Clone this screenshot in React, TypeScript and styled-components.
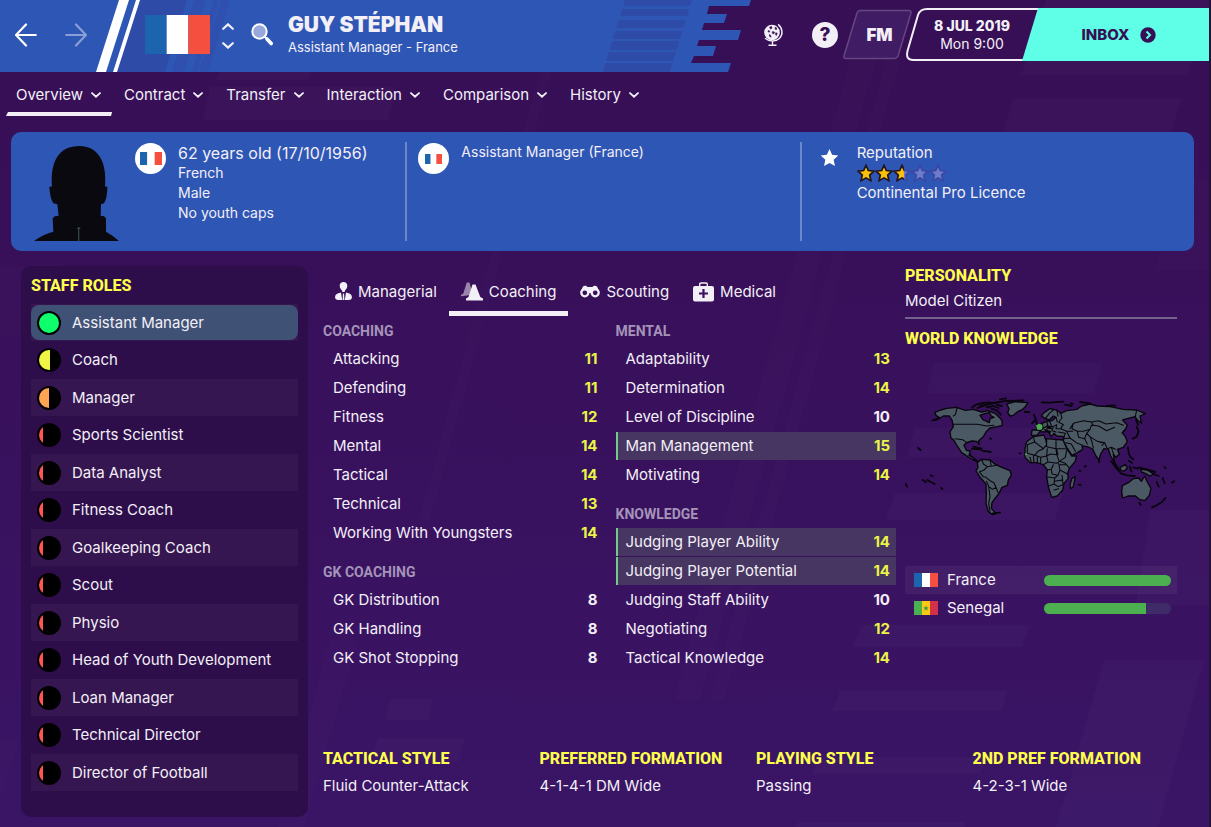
import React from "react";
import styled, { createGlobalStyle } from "styled-components";

const color = {
  blue: "#2e56b5",
  purple: "#370f55",
  purpleLow: "#3a1566",
  text: "#f3eff7",
  yellow: "#fffe4d",
  lime: "#e9f546",
  mint: "#5effe6",
  green: "#4caf50",
  muted: "#a594b9",
};

const font = {
  body: `Inter, "Liberation Sans", sans-serif`,
  heading: `Roboto, "Liberation Sans", sans-serif`,
};

const GlobalStyle = createGlobalStyle`
  *, *::before, *::after { box-sizing: border-box; }
  body {
    margin: 0;
    background: ${color.purpleLow};
    color: ${color.text};
    font-family: ${font.body};
    font-size: 15px;
    line-height: 20px;
  }
  button { font: inherit; color: inherit; background: none; border: 0; padding: 0; cursor: pointer; }
  ul, h1, h2, p, dl, dd { margin: 0; padding: 0; list-style: none; }
  svg { display: block; flex: none; }
`;

/* ---------- page frame ---------- */

const Page = styled.div`
  position: relative;
  isolation: isolate;
  display: flex;
  flex-direction: column;
  min-height: 100vh;
  overflow: hidden;
  background: linear-gradient(${color.purple}, #38105b 40%, ${color.purpleLow});
`;

const Backdrop = styled.svg`
  position: absolute;
  inset: 0;
  z-index: -1;
`;

const Header = styled.header`
  position: relative;
  display: flex;
  align-items: center;
  height: 72px;
  padding: 0 2px 3px 15px;
`;

const HeaderArt = styled.svg`
  position: absolute;
  left: 0;
  top: 0;
  z-index: -1;
`;

const History = styled.div`
  display: flex;
  gap: 28px;
`;

const FlagSlot = styled.div`
  margin: 0 12px 0 58px;
`;

const Stepper = styled.div`
  display: flex;
  flex-direction: column;
  gap: 12px;
  margin-right: 17px;
  padding-top: 3px;
`;

const Identity = styled.div`
  margin-left: 15px;
`;

const Name = styled.h1`
  font-size: 21px;
  line-height: 24px;
  font-weight: 900;
`;

const Subtitle = styled.p`
  font-size: 13px;
`;

const Tools = styled.div`
  display: flex;
  align-items: center;
  margin-left: auto;
`;

const IconButton = styled.button`
  margin-right: 29px;
`;

const HelpButton = styled.button`
  display: grid;
  place-items: center;
  width: 26px;
  height: 26px;
  margin-right: 5px;
  border-radius: 50%;
  background: ${color.text};
  color: ${color.purple};
  font-size: 19px;
  font-weight: 800;
`;

const SlantedButton = styled.button<{ $width: number }>`
  position: relative;
  display: grid;
  place-content: center;
  width: ${(p) => p.$width}px;
  height: 53px;
  text-align: center;
  font-size: 14px;
  line-height: 18px;

  svg { position: absolute; inset: 0; z-index: -1; }
  strong { font-weight: 800; }
`;

const FmButton = styled(SlantedButton)`
  margin-right: -6px;
  strong { font-size: 17px; font-weight: 900; padding-left: 4px; }
`;

const InboxButton = styled.button`
  display: flex;
  align-items: center;
  justify-content: center;
  gap: 11px;
  width: 187px;
  height: 53px;
  margin-left: -16px;
  padding-left: 7px;
  background: ${color.mint};
  clip-path: polygon(16px 0, 100% 0, 100% 100%, 0 100%);
  color: ${color.purple};
  font-weight: 800;
`;

/* ---------- section menu ---------- */

const Nav = styled.nav`
  display: flex;
  gap: 2px;
  padding: 0 6px;
`;

const NavItem = styled.button<{ $active?: boolean }>`
  display: flex;
  align-items: center;
  gap: 8px;
  height: 44px;
  padding: 2px 11px 0 10px;
  background: ${(p) => (p.$active ? `linear-gradient(${color.text}, ${color.text}) bottom / 100% 4px no-repeat` : "none")};
  clip-path: polygon(2px 0, 100% 0, 100% 40px, calc(100% - 1px) 100%, 0 100%, 2px 40px);
`;

/* ---------- summary card ---------- */

const Summary = styled.section`
  display: grid;
  grid-template-columns: repeat(3, minmax(0, 1fr));
  margin: 16px 17px 15px 11px;
  padding: 10px 0;
  border-radius: 10px;
  background: ${color.blue};
`;

const SummaryCell = styled.div<{ $inset: number }>`
  display: flex;
  align-items: flex-start;
  height: 99px;
  padding-left: ${(p) => p.$inset}px;

  & + & { border-left: 2px solid #6c88cb; }
`;

const Portrait = styled.svg`
  align-self: flex-end;
  margin-right: 16px;
`;

const RoundFlag = styled.div`
  display: grid;
  place-items: center;
  flex: none;
  width: 31px;
  height: 31px;
  margin: 1px 12px 0 0;
  border-radius: 50%;
  background: #fff;
`;

const Facts = styled.div<{ $small?: boolean }>`
  padding-top: 1px;
  font-size: ${(p) => (p.$small ? 14 : 15)}px;
`;

const Job = styled.p`
  font-size: 14px;
`;

const AgeLine = styled.p`
  font-size: 16px;
`;

const StarSlot = styled.div`
  margin: 6px 18px 0 0;
`;

const Stars = styled.div`
  display: flex;
  height: 20px;
  align-items: center;
`;

/* ---------- body ---------- */

const Body = styled.main`
  display: flex;
  flex: 1;
  gap: 15px;
  padding: 0 22px 10px 21px;
`;

const Sidebar = styled.aside`
  flex: none;
  width: 287px;
  padding: 10px 10px 26px;
  border-radius: 10px;
  background: #2d0e4b;
`;

const Heading = styled.h2`
  font-family: ${font.heading};
  font-size: 16px;
  line-height: 20px;
  font-weight: 800;
  color: ${color.yellow};
`;

const RoleList = styled.ul`
  && { margin-top: 8px; }
`;

const RoleRow = styled.li`
  height: 38px;
  padding: 1px 0;

  &:nth-child(odd) {
    height: 37px;
    background: #361650;
  }
`;

const RoleButton = styled.button<{ $selected: boolean }>`
  display: flex;
  align-items: center;
  gap: 11px;
  width: 100%;
  height: 100%;
  padding: 0 6px;
  border-radius: 8px;
  background: ${(p) => (p.$selected ? "#3f5276" : "transparent")};
`;

const Dial = styled.span`
  flex: none;
  width: 24px;
  height: 24px;
  padding: 2px;
  border-radius: 50%;
  background: #000;
`;

const DialFill = styled.span<{ $share: number; $tone: string }>`
  display: block;
  height: 100%;
  border-radius: 50%;
  background: linear-gradient(90deg, ${(p) => `${p.$tone} ${p.$share}%, #000 ${p.$share}%`});
`;

const Content = styled.div`
  display: flex;
  flex: 1;
  flex-direction: column;
  justify-content: space-between;
  min-width: 0;
`;

const Upper = styled.div`
  display: flex;
  gap: 9px;
  padding-right: 12px;
`;

const Attributes = styled.section`
  flex: 1;
  min-width: 0;
  padding-top: 2px;
`;

const Tabs = styled.div`
  display: flex;
`;

const Tab = styled.button<{ $active?: boolean }>`
  display: flex;
  align-items: center;
  gap: 6px;
  height: 48px;
  padding: 4px 12px 0;
  border-bottom: 5px solid ${(p) => (p.$active ? color.text : "transparent")};
`;

const AttributeColumns = styled.div`
  display: grid;
  grid-template-columns: 1fr 1fr;
  gap: 12px;
`;

const AttributeTable = styled.table`
  width: 100%;
  border-collapse: separate;
  border-spacing: 0 1px;

  & + & { margin-top: 9px; }
  tbody th, td { height: 28px; padding: 0; text-align: left; }
`;

const GroupName = styled.th`
  height: 27px;
  padding: 0;
  text-align: left;
  font-family: ${font.heading};
  font-size: 14px;
  line-height: 18px;
  font-weight: 700;
  color: ${color.muted};
`;

const AttributeRow = styled.tr<{ $key?: boolean }>`
  background: ${(p) => (p.$key ? "#473562" : "transparent")};

  && th { padding-left: 10px; font-weight: 400; box-shadow: ${(p) => (p.$key ? "inset 2px 0 #75c98a" : "none")}; }
`;

const Score = styled.td<{ $good: boolean }>`
  && { padding-right: 6px; text-align: right; }
  font-weight: 700;
  color: ${(p) => (p.$good ? color.lime : color.text)};
`;

const Knowledge = styled.aside`
  flex: none;
  width: 272px;
`;

const Personality = styled.p`
  && { padding: 5px 0 6px; margin-bottom: 10px; }
  border-bottom: 2px solid #76608c;
`;

const WorldMap = styled.svg`
  margin: 46px 0;
`;

const Nation = styled.div`
  display: flex;
  align-items: center;
  height: 28px;
  padding: 0 6px 0 9px;

  &:nth-of-type(odd) { background: rgba(255, 255, 255, 0.05); }
  span { flex: 1; padding-left: 9px; }
`;

const Bar = styled.div`
  width: 127px;
  height: 11px;
  border-radius: 6px;
  overflow: hidden;
  background: #3f2b68;
`;

const BarFill = styled.div`
  height: 100%;
  background: ${color.green};
`;

const Styles = styled.dl`
  display: grid;
  grid-template-columns: repeat(4, minmax(0, 1fr));
  padding-bottom: 21px;
`;

const StyleName = styled.dt`
  margin-bottom: 7px;
  font-family: ${font.heading};
  font-size: 16px;
  font-weight: 800;
  color: ${color.yellow};
`;

/* ---------- drawings ---------- */

const FranceFlag = ({ w, h }: { w: number; h: number }) => (
  <svg width={w} height={h} viewBox="0 0 3 2" preserveAspectRatio="none" aria-label="France" role="img">
    <rect width="1" height="2" fill="#1c65ae" />
    <rect x="1" width="1" height="2" fill="#fff" />
    <rect x="2" width="1" height="2" fill="#f5503f" />
  </svg>
);

const SenegalFlag = () => (
  <svg width="24" height="14" viewBox="0 0 24 14" aria-label="Senegal" role="img">
    <rect width="8" height="14" fill="#4caf50" />
    <rect x="8" width="8" height="14" fill="#fbc812" />
    <rect x="16" width="8" height="14" fill="#d3304a" />
    <path d="M12 4.500l.8 1.800 2 .1-1.600 1.300.6 2L12 8.600l-1.800 1.100.6-2-1.600-1.300 2-.1z" fill="#3f9a45" />
  </svg>
);

const Chevron = ({ up, w = 10, h = 6 }: { up?: boolean; w?: number; h?: number }) => (
  <svg width={w} height={h} viewBox="0 0 12 7" fill="none" stroke="#f3eff7" strokeWidth="2.200" strokeLinecap="round">
    <path d={up ? "M1.200 5.800L6 1.400l4.800 4.400" : "M1.200 1.200L6 5.600l4.800-4.400"} />
  </svg>
);

const Arrow = ({ forward }: { forward?: boolean }) => (
  <svg width="22" height="24" viewBox="0 0 22 24" fill="none" strokeWidth="2.200" strokeLinecap="round"
    stroke={forward ? "#8b9fd6" : "#fff"}>
    <path d={forward ? "M1.200 12H21M11 1.500L21 12 11 22.500" : "M20.800 12H1M11 1.500L1 12l10 10.500"} />
  </svg>
);

const SearchIcon = () => (
  <svg width="22" height="23" viewBox="0 0 22 23">
    <circle cx="8.500" cy="8.500" r="7.200" fill="#97a9dc" stroke="#fff" strokeWidth="2" />
    <path d="M13.800 13.800l2 2" stroke="#fff" strokeWidth="2" />
    <path d="M16.200 16.200l4 4.300" stroke="#fff" strokeWidth="3.600" strokeLinecap="round" />
  </svg>
);

const GlobeIcon = () => (
  <svg width="20" height="24" viewBox="0 0 20 24">
    <circle cx="9" cy="9.500" r="7.800" fill="#f3eff7" />
    <path d="M6.500 4l2-.6.600 1.600-1.500 1.200zM5 7.600l1.800.4-.4 1.200-1.200-.2zM9.500 8.500l2 .5-.4 1.500-1.100.5-.8-1.300zM12 4.200l1.800.8-.3 1.600-1.400-.3zM6.200 11.500l1.200.4.8 2.300-1.600-.6zM12.600 9.800l1.600.2-.6 2.400-1-.4z" fill="#370f55" stroke="#370f55" strokeWidth=".5" />
    <path d="M15.200 1.400c4.800 4 4.900 10.500 1.200 14-3.700 3.400-9.900 3.600-14.400-.2M9.500 18v4M5.500 22.300h8" fill="none" stroke="#f3eff7" strokeWidth="1.400" />
  </svg>
);

const STAR = "M8 .8l2.200 4.900 5.200.6-3.900 3.600 1.100 5.300L8 12.600l-4.600 2.600 1.100-5.300L.6 6.300l5.200-.6z";

const Star = ({ fill }: { fill: number }) => (
  <svg width="18" height="18" viewBox="-.5 -.5 17 17">
    <path d={STAR} fill="#6c7ccb" stroke="#3c46a3" strokeWidth="1.600" />
    {fill > 0 && (
      <g style={{ clipPath: `inset(-2px ${100 - fill}% -2px -2px)` }}>
        <path d={STAR} fill="#fcc008" stroke="#1f1620" strokeWidth="1.600" />
      </g>
    )}
  </svg>
);

const ManagerIcon = () => (
  <svg width="17" height="19" viewBox="0 0 17 19" fill="#f3eff7">
    <path d="M8.500 0c2.500 0 4 1.700 3.800 4-.1 2.100-1.500 3.600-2.300 4.600L9.600 10H7.400L7 8.600C6.200 7.600 4.800 6.100 4.700 4 4.500 1.700 6 0 8.500 0z" />
    <path d="M6 10.500L7.200 18H3.500C1 18 0 16.700.1 15c.1-2.200 1.500-3.500 5.900-4.500zM11 10.500L9.800 18h3.700c2.500 0 3.500-1.300 3.400-3-.1-2.200-1.500-3.500-5.900-4.500z" />
    <path d="M7.900 11.500h1.200l.3 6.500H7.600z" />
  </svg>
);

const ConesIcon = () => (
  <svg width="22" height="19" viewBox="0 0 22 19">
    <path d="M5.800.5h2.600l3.600 12.300L0 14.200v-1.400l2.200-1z" fill="#9a86ab" />
    <path d="M11.500 2.500h3l4.800 12.600 2.700 1.400v2H5v-2l2.500-1.400z" fill="#f3eff7" />
  </svg>
);

const BinocularsIcon = () => (
  <svg width="20" height="13" viewBox="0 0 20 13">
    <path d="M3 1.500C4 .3 6.500.3 7.500 2h5c1-1.700 3.500-1.700 4.500-.5L19.600 7h-6L11.500 8h-3L6.400 7H.4z" fill="#f3eff7" />
    <circle cx="4.800" cy="7.800" r="3.500" fill="#38105b" stroke="#f3eff7" strokeWidth="2.300" />
    <circle cx="15.200" cy="7.800" r="3.500" fill="#38105b" stroke="#f3eff7" strokeWidth="2.300" />
  </svg>
);

const MedicalIcon = () => (
  <svg width="21" height="20" viewBox="0 0 21 20">
    <rect y="4" width="21" height="15.500" rx="2" fill="#f3eff7" />
    <path d="M6.700 4.500V2.200c0-.8.5-1.200 1.200-1.200h5.200c.7 0 1.200.4 1.200 1.200v2.300" fill="none" stroke="#f3eff7" strokeWidth="1.400" />
    <path d="M10.500 7v9M6 11.500h9" stroke="#38105b" strokeWidth="2.200" />
  </svg>
);

const ROWS = [[0, 6], [9, 16], [20, 28], [31, 39], [41, 50], [52, 61], [63, 72]];

const HeaderDrawing = () => (
  <HeaderArt width="760" height="72" viewBox="0 0 760 72" aria-hidden="true">
    <path fill={color.blue} d="M0 0H751L749 6H709L707 14H727L724 23H704L702 30H741L738 40H699L697 46H716L713 56H694L691 63H731L728 72H0z" />
    <path fill="#2f4ba8" d="M140 0h47l-22 72h-48z" />
    <path fill="#2f50ae" d="M194 0h12l-22 72h-12zM214 0h5l-22 72h-5zM221 0h9l-22 72h-9z" />
    <path fill="#fff" d="M119 0h10l-23 72H96zM136 0h4l-23 72h-4z" />
    {ROWS.map(([a, b]) => (
      <path key={a} fill="#2f4ba8" d={`M${625 - a * 0.31} ${a}h67l${-(b - a) * 0.31} ${b - a}h-67z`} />
    ))}
  </HeaderArt>
);

const BackdropDrawing = () => (
  <Backdrop width="1211" height="827" viewBox="0 0 1211 827" aria-hidden="true">
    <g fill="#fff" fillOpacity=".018">
      <path d="M219 72h92l-3 8H216zM210 87h187l-9 33H203zM1046 0h165v8h-168zM1026 61h166l-4 14h-167zM1013 99h168l-22 75H991z" />
      <path d="M934 363h168l-8 30H927zM915 428h170l-10 29H907zM895 493h168l-8 27H886zM1150 510h61v95h-75z" />
      <path d="M862 625h168l-8 22H852zM840 691h168l-6 20H832zM818 757h168l-6 17H812zM798 822h167v5H796z" />
      <path d="M1104 660h100l-46 167h-102zM390 699h43l-4 21h-44zM378 738h87l-7 24h-87z" />
    </g>
    <g fill="#fff" fillOpacity=".01">
      <path d="M330 640h28l-54 187h-26zM540 72h11L430 520h-11zM850 60h26L700 700h-26zM886 60h14L724 700h-14zM1180 180h31v90h-56z" />
      <path d="M0 265h60l-22 70H0zM150 690h158l-20 70H130zM0 740h20L0 800z" />
    </g>
    <rect x="1209" width="2" height="827" fill="#241238" />
  </Backdrop>
);

const LAND = [
  "M134 128L152 120 170 115 200 112 226 121 250 118 275 126 292 122 315 130 326 140 336 152 337 166 322 170 300 174 288 186 280 200 266 212 268 224 260 214 245 213 230 218 222 226 229 241 241 243 237 256 250 262 260 273 240 264 215 248 200 225 190 208 183 205 180 186 190 170 186 150 178 138 160 138 140 150 126 152 148 143 138 136z",
  "M350 102L375 95 414 98 406 110 398 118 385 124 370 136 360 138 353 128 357 116z",
  "M262 278L275 268 300 270 312 280 330 290 360 302 364 315 355 330 352 346 336 352 326 372 316 384 306 398 304 415 318 431 308 434 295 425 288 400 289 372 288 342 272 324 258 303 264 292z",
  "M410 215L430 200 462 195 466 206 495 208 520 210 530 235 545 258 560 258 555 275 538 295 533 310 535 325 522 340 518 360 502 378 485 382 475 350 470 320 472 300 460 284 440 278 420 278 405 262 405 235z",
  "M424 196L426 180 442 180 440 168 456 160 470 154 486 152 498 142 490 138 478 150 466 146 454 138 462 128 480 116 500 120 512 130 530 122 560 118 575 108 600 102 622 108 660 110 700 118 740 120 766 131 750 138 755 160 742 150 735 140 715 145 698 150 712 166 704 182 696 188 706 200 712 215 700 232 682 238 688 252 678 262 670 252 674 278 662 258 655 238 642 236 632 252 627 270 618 258 608 237 592 230 576 228 578 238 562 248 546 256 530 232 520 212 522 200 500 198 492 190 484 200 474 184 462 186 450 185 440 196z",
  "M697 347L715 338 730 326 746 324 754 334 764 318 772 336 783 355 778 376 764 392 748 388 736 378 714 378 698 384 695 366z",
  "M546 325L556 320 550 350 542 356 540 344z",
  "M690 292L706 284 712 294 702 304 692 300z",
  "M752 298L772 300 790 312 780 318 766 310 754 306z",
];

const BORDERS =
  "M190 163H262L290 168 312 166M202 112L196 134 190 138M196 206L218 209 230 218M246 262L240 252M275 268L280 282 292 290 282 300 268 306M300 270L304 288 292 290M322 285L308 288 304 288M268 306L280 320 288 322 300 332 312 338 318 352 308 358 296 350 290 334M318 352L324 368M296 350L300 380 296 400 300 424M430 200L434 216 412 224M434 216L460 236 470 224 466 206M470 206L470 230 498 236 498 208M498 236L526 236M412 224V250L434 256M434 256L444 244 460 236M434 256L452 262 470 258 472 236M470 258L482 252 500 254 498 236M500 254L508 274 526 262 530 240M470 258L474 276 460 284M474 276L500 280 508 274 526 280 538 294M472 300L484 298 490 284M484 298L486 312 504 316 510 300 506 280M510 300L532 312M470 320L494 324 504 316M494 324L492 342 476 348M494 334L516 330 520 342M492 342L504 350 518 344M492 360L506 356M452 262V278M430 254L432 278M420 262L424 278M442 262V278M500 238L504 254M510 284H530M516 316L518 332 M512 130L516 144 506 156 520 164 512 176 530 184 548 184M498 142L502 156M540 176L550 160 580 152 604 156 626 152 648 162 680 158 700 166M550 160L546 176 562 184 580 184 600 178 604 166 626 168 M626 168L650 182 674 172M600 178L590 190 600 200 622 214 644 218 652 236M562 184L566 202 584 206 590 190M584 206L592 222M530 184L540 204 562 220 578 226M520 206L540 204M528 218L544 222 556 244M600 200L606 216 610 234M644 218L636 226M652 236L664 232 676 238M622 214L636 218M664 232L670 250M700 182L704 180M466 146L478 130 490 120M500 120L504 138M470 154L474 168 490 170 500 164M456 160L460 174 474 168M474 168L470 180M490 170L486 182 498 186M460 174L450 184M500 164L498 176 512 176M478 152L484 166 M504 186L526 190 522 200M442 180L452 184 M604 156L610 166M740 120L736 140";

const ISLANDS =
  "M246 112L260 103 280 99 300 97M262 114L285 106M270 108L296 103 318 98M290 112L310 108 326 114M300 100L330 96 350 92M304 116L322 122 332 134M320 104L335 108M330 88L348 85M350 93L400 91M455 97L480 98M485 97L520 95M525 104L545 108M570 96L600 100M650 108L676 106M404 126L418 126M426 160L434 152M432 134L438 150 441 164M84 234L92 240M47 342L51 350M98 330L108 336M112 330L122 336 134 342M122 316L128 318M154 354L157 357M246 236L270 238M250 230L275 236M276 242L302 246M300 206h3M388 250h3M308 430L330 428M740 170L746 184 740 200 728 206M738 150L744 164M714 232L716 246M716 250L722 262 730 268M716 272L726 278M664 274L680 296 690 306M672 276L686 298M692 310L712 316 734 318M720 290L724 304M730 292L744 296M746 292L770 298 796 306M790 312L806 318M800 336L806 350M818 324L824 340M824 292L827 294M846 338L852 334M748 398L752 404M826 384L816 396 800 406 786 412M568 302L571 304M566 344h6M584 290L588 288M626 272L628 276M542 100L548 102M250 268L262 274";

const MapDrawing = () => (
  <WorldMap width="272" height="125" viewBox="45 75 816 375" role="img" aria-label="World map" strokeLinejoin="round" strokeLinecap="round">
    {LAND.map((d) => <path key={d} d={d} fill="#4b5964" stroke="#08050c" strokeWidth="4" />)}
    <path d="M270 136L286 130 298 128 304 138 312 142 300 146 298 158 290 154 280 150z" fill="#38105b" stroke="#08050c" strokeWidth="4" />
    <path d={BORDERS} fill="none" stroke="#08050c" strokeWidth="3.200" />
    <path d={ISLANDS} fill="none" stroke="#08050c" strokeWidth="5.500" />
    <path d="M460 176l24 8-4 8-14-8zM468 166l16 4 2 8-14-2z" fill="#08050c" />
    <path d="M438 166l10-5 9 4-1 13-14 1z" fill={color.green} />
    <circle cx="408" cy="253" r="3" fill={color.green} />
  </WorldMap>
);

/* ---------- data ---------- */

const NAV = ["Overview", "Contract", "Transfer", "Interaction", "Comparison", "History"];

const RED = "#ff5555";
const ROLES: [string, number, string][] = [
  ["Assistant Manager", 100, "#0dff6b"],
  ["Coach", 56, "#f0f545"],
  ["Manager", 49, "#ffa455"],
  ...["Sports Scientist", "Data Analyst", "Fitness Coach", "Goalkeeping Coach", "Scout", "Physio",
    "Head of Youth Development", "Loan Manager", "Technical Director", "Director of Football",
  ].map((name): [string, number, string] => [name, 19, RED]),
];

type Attribute = [name: string, score: number, key?: boolean];
type Group = { name: string; rows: Attribute[] };

const COLUMNS: Group[][] = [
  [
    { name: "COACHING", rows: [["Attacking", 11], ["Defending", 11], ["Fitness", 12], ["Mental", 14], ["Tactical", 14], ["Technical", 13], ["Working With Youngsters", 14]] },
    { name: "GK COACHING", rows: [["GK Distribution", 8], ["GK Handling", 8], ["GK Shot Stopping", 8]] },
  ],
  [
    { name: "MENTAL", rows: [["Adaptability", 13], ["Determination", 14], ["Level of Discipline", 10], ["Man Management", 15, true], ["Motivating", 14]] },
    { name: "KNOWLEDGE", rows: [["Judging Player Ability", 14, true], ["Judging Player Potential", 14, true], ["Judging Staff Ability", 10], ["Negotiating", 12], ["Tactical Knowledge", 14]] },
  ],
];

const TABS = [
  { name: "Managerial", icon: <ManagerIcon /> },
  { name: "Coaching", icon: <ConesIcon /> },
  { name: "Scouting", icon: <BinocularsIcon /> },
  { name: "Medical", icon: <MedicalIcon /> },
];

const STYLES = [
  ["TACTICAL STYLE", "Fluid Counter-Attack"],
  ["PREFERRED FORMATION", "4-1-4-1 DM Wide"],
  ["PLAYING STYLE", "Passing"],
  ["2ND PREF FORMATION", "4-2-3-1 Wide"],
];

const NATIONS = [
  { name: "France", level: 100, flag: <FranceFlag w={24} h={14} /> },
  { name: "Senegal", level: 80, flag: <SenegalFlag /> },
];

/* ---------- screen ---------- */

export default function App() {
  return (
    <Page>
      <GlobalStyle />
      <BackdropDrawing />

      <Header>
        <HeaderDrawing />
        <History>
          <button aria-label="Back"><Arrow /></button>
          <button aria-label="Forward"><Arrow forward /></button>
        </History>
        <FlagSlot><FranceFlag w={65} h={39} /></FlagSlot>
        <Stepper>
          <button aria-label="Previous person"><Chevron up w={12} h={7} /></button>
          <button aria-label="Next person"><Chevron w={12} h={7} /></button>
        </Stepper>
        <button aria-label="Search"><SearchIcon /></button>
        <Identity>
          <Name>GUY STÉPHAN</Name>
          <Subtitle>Assistant Manager - France</Subtitle>
        </Identity>
        <Tools>
          <IconButton aria-label="World"><GlobeIcon /></IconButton>
          <HelpButton aria-label="Help">?</HelpButton>
          <FmButton $width={69}>
            <svg width="69" height="53" viewBox="0 0 69 53">
              <path d="M17 2.500H66Q68.500 2.500 68 5L55 48Q54 50.500 52 50.500H2.500Q.5 50.500 1 48L14 5Q15 2.500 17 2.500z" fill="#3f1c63" stroke="#65477f" strokeWidth="1.500" />
            </svg>
            <strong>FM</strong>
          </FmButton>
          <SlantedButton $width={132}>
            <svg width="132" height="53" viewBox="0 0 132 53">
              <path d="M132 1H21Q14 1 12 7L1.500 43Q-.5 52 7 52H120" fill="none" stroke="#f3eff7" strokeWidth="2" />
            </svg>
            <strong>8 JUL 2019</strong>
            <span>Mon 9:00</span>
          </SlantedButton>
          <InboxButton>
            INBOX
            <svg width="16" height="16" viewBox="0 0 16 16">
              <circle cx="8" cy="8" r="7.700" fill={color.purple} />
              <path d="M6.500 4.500L10 8l-3.500 3.500" fill="none" stroke={color.mint} strokeWidth="2" />
            </svg>
          </InboxButton>
        </Tools>
      </Header>

      <Nav>
        {NAV.map((name, i) => (
          <NavItem key={name} $active={i === 0}>{name}<Chevron /></NavItem>
        ))}
      </Nav>

      <Summary>
        <SummaryCell $inset={23}>
          <Portrait width="85" height="95" viewBox="102 63 255 285" aria-hidden="true">
            <path d="M102 348Q125 330 160 320L158 280 164 274 176 272 172 238 160 235Q150 220 148 186L156 184C150 105 180 63 238 63 290 63 322 105 315 184L322 186Q322 220 312 235L303 238 302 272 312 274 318 280V320Q340 332 357 348z" fill="#0a0910" />
            <path d="M236 306V348M231 310h10" stroke="#33424d" strokeWidth="4" />
          </Portrait>
          <RoundFlag><FranceFlag w={22} h={13} /></RoundFlag>
          <Facts $small>
            <AgeLine>62 years old (17/10/1956)</AgeLine>
            <p>French</p>
            <p>Male</p>
            <p>No youth caps</p>
          </Facts>
        </SummaryCell>
        <SummaryCell $inset={11}>
          <RoundFlag><FranceFlag w={17} h={10} /></RoundFlag>
          <Job>Assistant Manager (France)</Job>
        </SummaryCell>
        <SummaryCell $inset={18}>
          <StarSlot>
            <svg width="19" height="19" viewBox="0 0 16 16"><path d={STAR} fill="#fff" /></svg>
          </StarSlot>
          <Facts>
            <p>Reputation</p>
            <Stars role="img" aria-label="2.5 stars out of 5">
              {[100, 100, 60, 0, 0].map((fill, i) => <Star key={i} fill={fill} />)}
            </Stars>
            <p>Continental Pro Licence</p>
          </Facts>
        </SummaryCell>
      </Summary>

      <Body>
        <Sidebar>
          <Heading>STAFF ROLES</Heading>
          <RoleList>
            {ROLES.map(([name, share, tone], i) => (
              <RoleRow key={name}>
                <RoleButton $selected={i === 0}>
                  <Dial><DialFill $share={share} $tone={tone} /></Dial>
                  {name}
                </RoleButton>
              </RoleRow>
            ))}
          </RoleList>
        </Sidebar>

        <Content>
          <Upper>
            <Attributes>
              <Tabs role="tablist">
                {TABS.map(({ name, icon }) => (
                  <Tab key={name} role="tab" aria-selected={name === "Coaching"} $active={name === "Coaching"}>
                    {icon}{name}
                  </Tab>
                ))}
              </Tabs>
              <AttributeColumns>
                {COLUMNS.map((groups, i) => (
                  <div key={i}>
                    {groups.map((group) => (
                      <AttributeTable key={group.name}>
                        <thead><tr><GroupName colSpan={2}>{group.name}</GroupName></tr></thead>
                        <tbody>
                          {group.rows.map(([name, score, key]) => (
                            <AttributeRow key={name} $key={key}>
                              <th scope="row">{name}</th>
                              <Score $good={score > 10}>{score}</Score>
                            </AttributeRow>
                          ))}
                        </tbody>
                      </AttributeTable>
                    ))}
                  </div>
                ))}
              </AttributeColumns>
            </Attributes>

            <Knowledge>
              <Heading>PERSONALITY</Heading>
              <Personality>Model Citizen</Personality>
              <Heading>WORLD KNOWLEDGE</Heading>
              <MapDrawing />
              {NATIONS.map(({ name, level, flag }) => (
                <Nation key={name}>
                  {flag}
                  <span>{name}</span>
                  <Bar><BarFill style={{ width: `${level}%` }} /></Bar>
                </Nation>
              ))}
            </Knowledge>
          </Upper>

          <Styles>
            {STYLES.map(([name, value]) => (
              <div key={name}>
                <StyleName>{name}</StyleName>
                <dd>{value}</dd>
              </div>
            ))}
          </Styles>
        </Content>
      </Body>
    </Page>
  );
}
